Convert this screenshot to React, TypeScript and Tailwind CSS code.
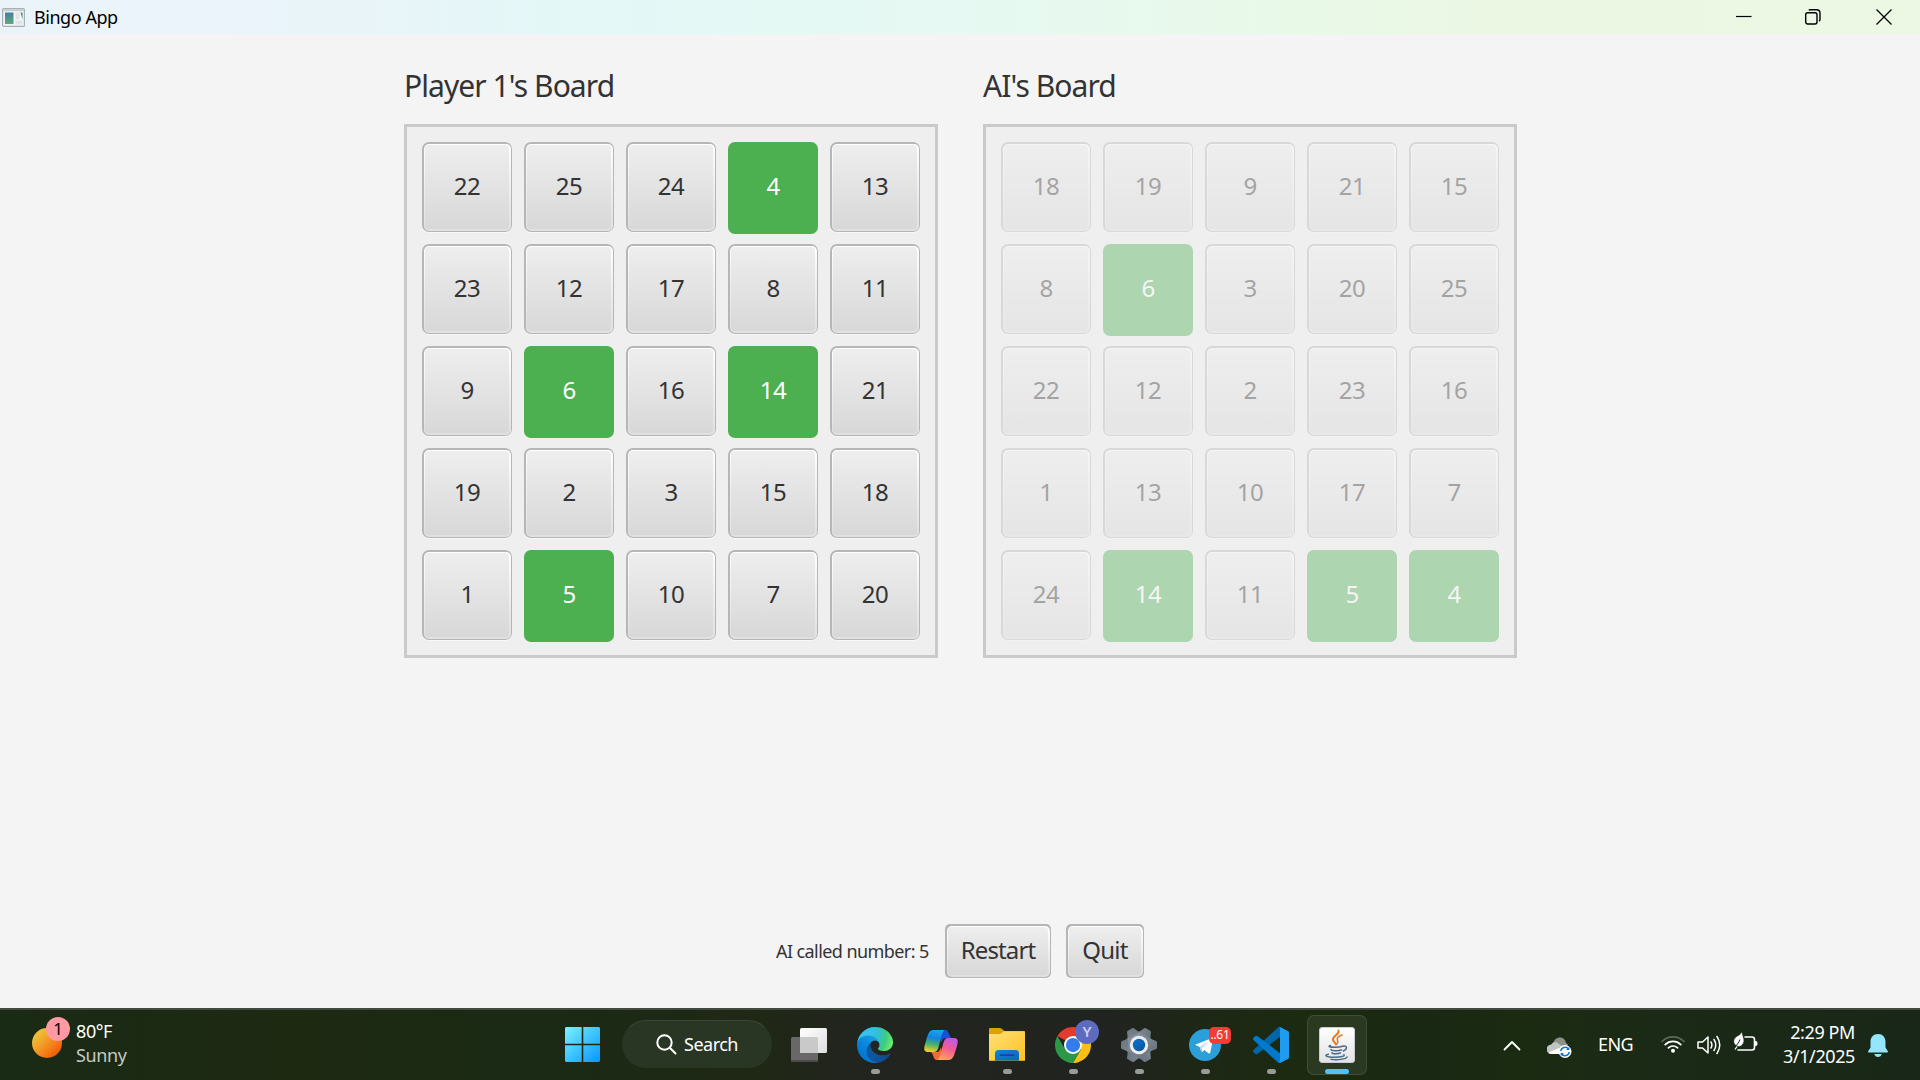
import React from "react";

const PLAYER = [22, 25, 24, 4, 13, 23, 12, 17, 8, 11, 9, 6, 16, 14, 21, 19, 2, 3, 15, 18, 1, 5, 10, 7, 20];
const AI = [18, 19, 9, 21, 15, 8, 6, 3, 20, 25, 22, 12, 2, 23, 16, 1, 13, 10, 17, 7, 24, 14, 11, 5, 4];
const CALLED = [4, 5, 6, 14];

function Bevel({ className, radius, children }: { className: string; radius: string; children: React.ReactNode }) {
  return (
    <div className={`bg-[#b6b6b6] p-[1.5px] shadow-[0_1px_0_#f8f8f8] ${radius} ${className}`}>
      <div className="h-full w-full rounded-[5px] bg-gradient-to-b from-white to-[#e0e0e0] p-[1.5px]">
        <div className="flex h-full w-full items-center justify-center rounded-[4px] bg-gradient-to-b from-[#eeeeee] to-[#d8d8d8]">
          {children}
        </div>
      </div>
    </div>
  );
}

function Cell({ n }: { n: number }) {
  const label = "text-[24px] leading-none tracking-[-0.6px]";
  if (CALLED.includes(n)) {
    return (
      <div className="-mb-[1.5px] flex h-[91.5px] w-[90px] items-center justify-center rounded-[7px] bg-[#4caf50] pb-[4px]">
        <span className={`${label} text-white`}>{n}</span>
      </div>
    );
  }
  return (
    <Bevel className="h-[90px] w-[90px]" radius="rounded-[7px]">
      <span className={`${label} pb-[2px] text-[#333333]`}>{n}</span>
    </Bevel>
  );
}

function Board({ title, numbers, disabled }: { title: string; numbers: number[]; disabled?: boolean }) {
  return (
    <section className="w-[534px]">
      <h2 className="flex h-[90px] items-center whitespace-nowrap pt-[14px] text-[30px] leading-none tracking-[-0.93px] text-[#333333]">
        {title}
      </h2>
      <div className="h-[534px] border-[3px] border-[#cacaca] bg-[#efefef] p-[15px]">
        <div className="grid grid-cols-5 grid-rows-[repeat(5,90px)] gap-3">
          {numbers.map((n) => (
            <div key={n} className={disabled ? "opacity-40" : ""}>
              <Cell n={n} />
            </div>
          ))}
        </div>
      </div>
    </section>
  );
}

function TitleBar() {
  return (
    <header className="flex h-[34px] items-center justify-between bg-[linear-gradient(90deg,#eaf4f8_0%,#ebf4fb_6%,#e9f4f9_18%,#e3f8f7_31%,#e6f9f2_50%,#e9f9e8_68%,#ebf7e3_78%,#ecf8e3_100%)] pl-[2px] text-black">
      <div className="flex items-center">
        <svg width="23" height="19" viewBox="0 0 23 19">
          <rect x=".6" y=".6" width="21.8" height="17.8" rx="1" fill="#f3f4f5" stroke="#a9b1b8" strokeWidth="1.2" />
          <path d="M1.2 1.2h20.6v2H1.2z" fill="#c4ccd2" />
          <path d="M3 4.5h8.5V16H3z" fill="url(#win)" />
          <path d="M13.5 4.5h4V11h-4zM13.500 12.500h7v4h-7z" fill="#e3e3e3" />
          <path d="M18.500 4.500h2v7z" fill="#438d8c" />
          <defs>
            <linearGradient id="win" x1="0" y1="0" x2="0" y2="1">
              <stop stopColor="#447fa4" />
              <stop offset="1" stopColor="#5faa75" />
            </linearGradient>
          </defs>
        </svg>
        <span className="ml-[9px] text-[18px] font-[370] leading-none tracking-[-0.45px]">Bingo App</span>
      </div>
      <div className="flex items-center pr-[28px]">
        <svg width="16" height="16" viewBox="0 0 16 16" stroke="#000" strokeWidth="1.2">
          <path d="M0 7.500h15.500" />
        </svg>
        <svg className="ml-[53px]" width="16" height="16" viewBox="0 0 16 16" fill="none" stroke="#000" strokeWidth="1.400">
          <rect x=".7" y="3.700" width="11.300" height="11.300" rx="2" />
          <path d="M3.700 1.300Q4.300.7 5.500.7h6q3.500 0 3.500 3.500v6q0 1.200-1 1.900" />
        </svg>
        <svg className="ml-[55px]" width="16" height="16" viewBox="0 0 16 16" stroke="#000" strokeWidth="1.300">
          <path d="M.5.5l15 15M15.500.5l-15 15" />
        </svg>
      </div>
    </header>
  );
}

function AppSlot({ children, running, active }: { children: React.ReactNode; running?: boolean; active?: boolean }) {
  return (
    <div className="flex h-[70px] w-[66px] shrink-0 items-center justify-center pb-px">
      <div
        className={`relative flex h-[60px] w-[60px] items-center justify-center rounded-[7px] ${
          active ? "border border-white/10 bg-white/[0.07]" : ""
        }`}
      >
        {children}
        {running && <div className="absolute bottom-px left-[25.5px] h-[5px] w-[9px] rounded-full bg-[#999b98]" />}
        {active && <div className="absolute bottom-0 left-[17px] h-[5px] w-[24px] rounded-full bg-[#4cc2ff]" />}
      </div>
    </div>
  );
}

function StartIcon() {
  return (
    <svg width="35" height="35" viewBox="0 0 35 35">
      <defs>
        <linearGradient id="st" x1="0" y1="0" x2="35" y2="35" gradientUnits="userSpaceOnUse">
          <stop stopColor="#7df1ff" />
          <stop offset=".5" stopColor="#3fc4ff" />
          <stop offset="1" stopColor="#0a96ff" />
        </linearGradient>
      </defs>
      <path fill="url(#st)" d="M1 0h15.700v16.700H0V1zM18.300 0H34l1 1v15.700H18.300zM0 18.300h16.700V35H1l-1-1zM18.300 18.300H35V34l-1 1H18.300z" />
    </svg>
  );
}

function TaskViewIcon() {
  return (
    <svg width="36" height="34" viewBox="0 0 36 34">
      <defs>
        <linearGradient id="tv" x1="0" y1="0" x2="1" y2="1">
          <stop stopColor="#ffffff" />
          <stop offset="1" stopColor="#dedede" />
        </linearGradient>
      </defs>
      <rect x="0" y="9" width="27" height="25" rx="1.500" fill="#686868" />
      <path d="M0 32h27v.5q0 1.500-1.500 1.500h-24Q0 34 0 32.500z" fill="#4b4b4b" />
      <rect x="9" y="0" width="27" height="25" rx="1.500" fill="url(#tv)" />
      <path d="M9 9h16.500Q27 9 27 10.500V25H10.500Q9 25 9 23.500z" fill="#c9c9c9" />
    </svg>
  );
}

function EdgeIcon() {
  return (
    <svg width="36" height="36" viewBox="0 0 256 256">
      <defs>
        <linearGradient id="ea" x1="63" x2="242" y1="177" y2="177" gradientUnits="userSpaceOnUse">
          <stop stopColor="#0c59a4" />
          <stop offset="1" stopColor="#114a8b" />
        </linearGradient>
        <linearGradient id="eb" x1="158" x2="46" y1="100" y2="221" gradientUnits="userSpaceOnUse">
          <stop stopColor="#1b9de2" />
          <stop offset=".2" stopColor="#1595df" />
          <stop offset=".7" stopColor="#0680d7" />
          <stop offset="1" stopColor="#0078d4" />
        </linearGradient>
        <radialGradient id="ec" cx="26" cy="47" r="230" gradientUnits="userSpaceOnUse">
          <stop stopColor="#35c1f1" />
          <stop offset=".3" stopColor="#34c1ed" />
          <stop offset=".55" stopColor="#2fc2cf" />
          <stop offset=".8" stopColor="#40ca7e" />
          <stop offset="1" stopColor="#66eb6e" />
        </radialGradient>
      </defs>
      <path fill="url(#ea)" d="M231 190.500c-3.400 1.800-6.900 3.400-10.500 4.700a101.800 101.800 0 0 1-35.900 6.500c-47.300 0-88.500-32.500-88.500-74.300a31.500 31.500 0 0 1 16.400-27.300c-42.800 1.800-53.800 46.400-53.800 72.500 0 74 68.100 81.400 82.800 81.400 7.900 0 19.800-2.300 27-4.600l1.300-.4a128.300 128.300 0 0 0 66.600-52.800 4 4 0 0 0-5.400-5.700z" />
      <path fill="url(#eb)" d="M105.700 241.400a79.200 79.200 0 0 1-22.700-21.300 80.700 80.700 0 0 1 29.500-120c3.200-1.500 8.500-4.100 15.600-4a32.400 32.400 0 0 1 25.700 13 31.900 31.900 0 0 1 6.300 18.700c0-.2 24.500-79.600-80-79.600-43.900 0-80 41.700-80 78.200a130.200 130.200 0 0 0 12.100 56 128 128 0 0 0 156.400 67.100 75.600 75.600 0 0 1-62.800-8z" />
      <path fill="url(#ec)" d="M152.300 148.900c-.8 1-3.300 2.500-3.300 5.700 0 2.600 1.700 5.200 4.800 7.300 14.400 10 41.500 8.700 41.600 8.700a59.600 59.600 0 0 0 30.300-8.300 61.400 61.400 0 0 0 30.400-52.900c.3-22.400-8-37.300-11.300-43.900C223.600 23.900 177.700 0 128 0A128 128 0 0 0 0 126.200c.5-36.500 36.800-66 80-66 3.500 0 23.500.3 42 10a72.600 72.600 0 0 1 30.900 29.300c6.100 10.600 7.200 24.100 7.200 29.500s-2.700 13.300-7.800 19.900z" />
    </svg>
  );
}

function CopilotIcon() {
  return (
    <svg width="34" height="32" viewBox="0 0 34 32">
      <defs>
        <linearGradient id="ca" x1="10" y1="1" x2="6" y2="23" gradientUnits="userSpaceOnUse">
          <stop stopColor="#17a5f0" />
          <stop offset=".35" stopColor="#1382df" />
          <stop offset=".65" stopColor="#4db26a" />
          <stop offset="1" stopColor="#ffd21c" />
        </linearGradient>
        <linearGradient id="cb" x1="28" y1="8" x2="20" y2="31" gradientUnits="userSpaceOnUse">
          <stop stopColor="#b65af2" />
          <stop offset=".5" stopColor="#f25a93" />
          <stop offset="1" stopColor="#ffa45c" />
        </linearGradient>
      </defs>
      <path d="M15 1h6.500c3.500 0 4 8 6.500 8h-7c-2 0-3 2-4 5z" fill="#1c4fd6" />
      <path d="M19 31h-6.500C9 31 9.500 23 6 23h7c2 0 3-2 4-5z" fill="#f4683a" />
      <path d="M21.500 1H9.500C4.500 1 3.500 7 1.800 12.500.2 18-1.500 23 4 23h6c4 0 4.500-5 6-10S18 1 21.500 1z" fill="url(#ca)" />
      <path d="M12.500 31h12c5 0 6-6 7.700-11.500C33.800 14 35.500 9 30 9h-6c-4 0-4.500 5-6 10s-2 12-5.500 12z" fill="url(#cb)" />
    </svg>
  );
}

function FolderIcon() {
  return (
    <svg width="36" height="33" viewBox="0 0 36 33">
      <defs>
        <linearGradient id="fo" x1="0" y1="0" x2="1" y2="1">
          <stop stopColor="#ffe07a" />
          <stop offset="1" stopColor="#ffc020" />
        </linearGradient>
        <linearGradient id="fb" x1="0" y1="0" x2="1" y2="1">
          <stop stopColor="#0d83d8" />
          <stop offset="1" stopColor="#0f66b4" />
        </linearGradient>
      </defs>
      <path d="M0 1.200Q0 0 1.200 0h9.500q1 0 1.700.6L15.500 3H35q1 0 1 1v6H0z" fill="#e0a00a" />
      <path d="M0 6h10.500q1.300 0 2.200-.8l1.500-1.400q.6-.5 1.500-.5H35q1 0 1 1V32q0 1-1 1H1q-1 0-1-1z" fill="url(#fo)" />
      <path d="M6 33v-7.500Q6 22 9.500 22h17q3.500 0 3.500 3.500V33z" fill="url(#fb)" />
      <rect x="10.500" y="26.300" width="15" height="1.800" rx=".9" fill="#114a8b" />
      <path d="M0 32h36q0 1-1 1H1q-1 0-1-1z" fill="#a98a3a" opacity=".5" />
    </svg>
  );
}

function ChromeIcon() {
  return (
    <div className="relative h-9 w-9">
      <svg width="36" height="36" viewBox="0 0 48 48">
        <path d="M24 24L3.220 12A24 24 0 0 1 44.780 12z" fill="#e33b2e" />
        <path d="M24 12h20.780A24 24 0 0 1 24 48l10.400-18z" fill="#fcc013" />
        <path d="M13.600 30L3.220 12A24 24 0 0 0 24 48l10.390-18z" fill="#2a9847" />
        <circle cx="24" cy="24" r="12" fill="#fff" />
        <circle cx="24" cy="24" r="9.500" fill="#327ced" />
      </svg>
      <div className="absolute -top-[7px] left-5 flex h-6 w-6 items-center justify-center rounded-full bg-[#5c6bc0] text-[15px] font-semibold leading-none text-[#c9cee9]">
        Y
      </div>
    </div>
  );
}

function SettingsIcon() {
  const teeth = [0, 60, 120, 180, 240, 300];
  return (
    <svg width="36" height="36" viewBox="-18 -18 36 36">
      <defs>
        <linearGradient id="ge" x1="-12" y1="-18" x2="12" y2="18" gradientUnits="userSpaceOnUse">
          <stop stopColor="#969fa7" />
          <stop offset="1" stopColor="#616c78" />
        </linearGradient>
        <linearGradient id="gc" x1="0" y1="0" x2="1" y2="1">
          <stop stopColor="#0d74cd" />
          <stop offset="1" stopColor="#0b529b" />
        </linearGradient>
      </defs>
      <g fill="url(#ge)">
        <circle r="13.500" />
        {teeth.map((a) => (
          <path key={a} d="M11-6.500L17-4q1 .5 1 1.500v5q0 1-1 1.500l-6 2.500z" transform={`rotate(${a})`} />
        ))}
      </g>
      <circle r="9.200" fill="#ececec" />
      <circle r="6.200" fill="url(#gc)" />
    </svg>
  );
}

function TelegramIcon() {
  return (
    <div className="relative h-8 w-8">
      <svg width="32" height="32" viewBox="0 0 32 32">
        <circle cx="16" cy="16" r="16" fill="#2b9fd9" />
        <path d="M6 15.800L22.500 9.200q1.700-.5 1.400 1.300L21.300 23.500q-.4 1.500-1.800.7l-4.200-3.100-2.200 2.100-.3-4.200z" fill="#fff" />
        <path d="M12.200 23.300l-1.700-5.600 9.700-5.500-7.200 7z" fill="#c5daea" />
      </svg>
      <div className="absolute -top-[2px] left-5 flex h-[17px] w-[22px] items-center justify-center rounded-[5px] bg-[#f23c34] text-[12px] leading-none tracking-[-0.3px] text-white">
        ..61
      </div>
    </div>
  );
}

function VSCodeIcon() {
  return (
    <svg width="36" height="36" viewBox="0 0 100 100">
      <path d="M96.500 10.800L75.900.9a6.200 6.200 0 0 0-7.100 1.200L1.300 63.600a4.200 4.200 0 0 0 0 6.200l5.500 5a4.200 4.200 0 0 0 5.300.2l81.200-61.600c2.700-2.100 6.700-.1 6.700 3.300v-.2a6.300 6.300 0 0 0-3.500-5.700z" fill="#0065a9" />
      <path d="M96.500 89.200l-20.600 9.900a6.200 6.200 0 0 1-7.100-1.200L1.300 36.400a4.200 4.200 0 0 1 0-6.200l5.500-5a4.200 4.200 0 0 1 5.300-.2l81.200 61.600c2.700 2.100 6.700.1 6.700-3.300v.2a6.300 6.300 0 0 1-3.500 5.700z" fill="#007acc" />
      <path d="M75.900 99.100a6.200 6.200 0 0 1-7.100-1.200c2.300 2.300 6.200.7 6.200-2.600V4.700c0-3.300-3.900-4.900-6.200-2.600A6.200 6.200 0 0 1 75.900.9l20.600 9.900A6.300 6.300 0 0 1 100 16.400v67.200c0 2.400-1.400 4.600-3.500 5.600z" fill="#1f9cf0" />
    </svg>
  );
}

function JavaIcon() {
  return (
    <svg width="36" height="36" viewBox="0 0 36 36" fill="none" strokeLinecap="round">
      <defs>
        <linearGradient id="jv" x1="0" y1="0" x2="0" y2="1">
          <stop stopColor="#ffffff" />
          <stop offset="1" stopColor="#e2e2e4" />
        </linearGradient>
      </defs>
      <rect x=".5" y=".5" width="35" height="35" rx="2.500" fill="url(#jv)" stroke="#c9cdd1" />
      <path d="M19.500 3.500c1.500 4-6.500 5.500-5.500 9.500.4 1.800 2.600 2.800 3 4.500" stroke="#e87722" strokeWidth="2" />
      <path d="M23 8c-4 1.500-5.500 3-4.500 5 .8 1.600.8 2.500-.5 4" stroke="#e87722" strokeWidth="1.600" />
      <path d="M11.500 18.500c-3 1-1 1.800 4.500 1.800 3.500 0 6-.4 7.500-1M12 22.500c0 1.500 8 1.600 10.500.3M13 25.700c.5 1.500 6.500 1.500 8.500.2M24 19.300c4-1.500 5 2.700.3 4.700" stroke="#4a6b8c" strokeWidth="1.500" />
      <path d="M9.500 27.200c-5 1-2.500 3 6 3 6 0 11-.9 9.500-2.600M12 32.400c6 .8 15 0 16-2.400" stroke="#4a6b8c" strokeWidth="1.400" />
    </svg>
  );
}

function Tray() {
  return (
    <div className="flex h-[70px] items-center pb-[2px] text-[18px] leading-none text-white">
      <svg className="mt-[3px]" width="18" height="12" viewBox="0 0 18 12" fill="none" stroke="#fff" strokeWidth="1.800" strokeLinecap="round" strokeLinejoin="round">
        <path d="M1.500 9.500L9 2l7.500 7.500" />
      </svg>
      <svg className="ml-[26px] mt-[6px]" width="25" height="21" viewBox="0 0 25 21">
        <path d="M6 6.500C7 2.500 10 .5 13 .5c3.500 0 5.500 2.500 6 5.500 1 .3 1.500 1 2 2L12 14z" fill="#8b928a" />
        <path d="M4.500 17a4.700 4.700 0 0 1-.3-9.500C6 4.500 10 4.500 12 7l6 4v6z" fill="#c2c6c1" />
        <path d="M1.500 15.500L12 11l6 4v2H4.500q-1.800 0-3-1.500z" fill="#fff" />
        <circle cx="18" cy="14.500" r="6.500" fill="#fff" />
        <path d="M13.800 14a4.300 4.300 0 0 1 7.700-2M22.200 15a4.300 4.300 0 0 1-7.700 2" fill="none" stroke="#1573cc" strokeWidth="1.600" />
        <path d="M22.300 9.800v3.200h-3.200zM13.700 19.200V16h3.200z" fill="#1573cc" />
      </svg>
      <span className="ml-[26px] w-[36px] whitespace-nowrap tracking-[-0.6px]">ENG</span>
      <svg className="ml-[27px]" width="24" height="18" viewBox="0 0 24 18" fill="none" strokeLinecap="round" strokeWidth="1.700">
        <path d="M1 6.500a15.500 15.500 0 0 1 22 0" stroke="#5c6859" />
        <path d="M4.200 9.700a11 11 0 0 1 15.600 0M7.400 12.900a6.500 6.500 0 0 1 9.200 0" stroke="#fff" />
        <circle cx="12" cy="15.800" r="2" fill="#fff" />
      </svg>
      <svg className="ml-[12px] mt-[2px]" width="24" height="20" viewBox="0 0 24 20" fill="none" stroke="#fff" strokeWidth="1.500" strokeLinecap="round" strokeLinejoin="round">
        <path d="M1 7h4.500L11 2v16l-5.500-5H1z" />
        <path d="M14 7q1.800 3 0 6M17 4.500q3.500 5.500 0 11M20 1.500q5.500 8.500 0 17" />
      </svg>
      <svg className="ml-[12px] mt-[-4px]" width="25" height="21" viewBox="0 0 25 21" fill="none" stroke="#fff" strokeWidth="1.600" strokeLinejoin="round">
        <path d="M12 5h7q2.500 0 2.500 2.500v8q0 2.500-2.500 2.500H5" strokeLinecap="round" />
        <path d="M22 9.500h1q1 0 1 1v2q0 1-1 1h-1z" fill="#fff" strokeWidth=".8" />
        <path d="M8.500.8C9 4 10.500 6 10.300 9.300 10 13 7 14.500 4.500 13.800 1 12.500.5 8.500 2.500 6 4.500 4 7.500 4 8.500.8z" fill="#fff" strokeWidth=".6" />
        <path d="M7 7.500C6 10 4.500 12 1.500 16" stroke="#1a2916" strokeWidth="1" />
        <path d="M2 17.500L4 14.500" strokeWidth="1.300" />
      </svg>
      <div className="ml-[9px] flex w-[88px] flex-col items-end gap-[6px] whitespace-nowrap tracking-[-0.4px]">
        <span>2:29 PM</span>
        <span>3/1/2025</span>
      </div>
      <svg className="ml-[13px] mr-[32px] mt-[3px]" width="20" height="24" viewBox="0 0 20 24" fill="#92e7ff">
        <path d="M10 0c-4.600 0-7.500 3.500-7.500 8v5.500L.2 17.200q-.6 1.300.8 1.300h18q1.400 0 .8-1.300l-2.300-3.700V8c0-4.500-2.900-8-7.500-8zM6.300 20h7.400q-.8 3-3.700 3t-3.700-3z" />
      </svg>
    </div>
  );
}

function Taskbar() {
  return (
    <footer className="grid h-[72px] grid-cols-[549px_825px_1fr] border-t-2 border-[#424a3f] bg-[linear-gradient(90deg,#192a15_0%,#1e2912_15%,#1a2a14_28%,#1f2814_39%,#22241f_45%,#212320_58%,#1e2716_62%,#1b2b10_69%,#192813_74%,#1b2b12_79%,#1a2a16_86%,#192718_100%)]">
      <div className="flex pl-[32px] pt-[7px]">
        <div className="relative h-[43px] w-[38px]">
          <div className="mt-[11px] h-[30px] w-[30px] rounded-full bg-gradient-to-br from-[#eebd35] from-20% to-[#f46209] to-80%" />
          <div className="absolute -top-0 left-[13.500px] flex h-6 w-6 items-center justify-center rounded-full bg-[#ff99a4] pb-px pl-px text-[17px] leading-none text-black">
            1
          </div>
        </div>
        <div className="ml-[6px] flex flex-col gap-[6px] pt-[5px] text-[18px] leading-none tracking-[-0.4px]">
          <span className="text-white">80°F</span>
          <span className="text-[#c5cac4]">Sunny</span>
        </div>
      </div>
      <div className="flex h-[70px] items-center">
        <div className="flex w-[67px] shrink-0 justify-center pb-px">
          <StartIcon />
        </div>
        <div className="ml-[6px] flex h-12 w-[150px] shrink-0 items-center rounded-full border border-transparent border-t-[#3a4636] bg-[#2a3624] mb-[2px] pl-[33px]">
          <svg width="21" height="21" viewBox="0 0 21 21" fill="none" stroke="#fff" strokeWidth="2" strokeLinecap="round">
            <circle cx="8.500" cy="8.500" r="7.200" />
            <path d="M13.800 13.800L19.500 19.500" />
          </svg>
          <span className="ml-[7px] text-[18px] leading-none tracking-[-0.5px] text-white">Search</span>
        </div>
        <div className="ml-1 flex w-[66px] shrink-0 justify-center pb-px">
          <TaskViewIcon />
        </div>
        <AppSlot running><EdgeIcon /></AppSlot>
        <AppSlot><CopilotIcon /></AppSlot>
        <AppSlot running><FolderIcon /></AppSlot>
        <AppSlot running><ChromeIcon /></AppSlot>
        <AppSlot running><SettingsIcon /></AppSlot>
        <AppSlot running><TelegramIcon /></AppSlot>
        <AppSlot running><VSCodeIcon /></AppSlot>
        <AppSlot active><JavaIcon /></AppSlot>
      </div>
      <div className="flex justify-end">
        <Tray />
      </div>
    </footer>
  );
}

export default function App() {
  return (
    <div className="flex h-[1080px] w-[1920px] flex-col overflow-hidden bg-[#f4f4f4] font-['Noto_Sans','Open_Sans',sans-serif] font-[370]">
      <TitleBar />
      <main className="flex flex-1 flex-col justify-between">
        <div className="flex gap-[45px] pl-[404px]">
          <Board title="Player 1's Board" numbers={PLAYER} />
          <Board title="AI's Board" numbers={AI} disabled />
        </div>
        <div className="mb-[30px] flex h-[54px] items-center pl-[776px]">
          <span className="w-[169px] whitespace-nowrap text-[18px] leading-none tracking-[-0.58px] text-[#333333]">
            AI called number: 5
          </span>
          <Bevel className="h-[54px] w-[106px]" radius="rounded-[5px]">
            <span className="pb-[2px] text-[24px] leading-none tracking-[-0.9px] text-[#333333]">Restart</span>
          </Bevel>
          <Bevel className="ml-[15px] h-[54px] w-[78px]" radius="rounded-[5px]">
            <span className="pb-[2px] text-[24px] leading-none tracking-[-0.7px] text-[#333333]">Quit</span>
          </Bevel>
        </div>
      </main>
      <Taskbar />
    </div>
  );
}
